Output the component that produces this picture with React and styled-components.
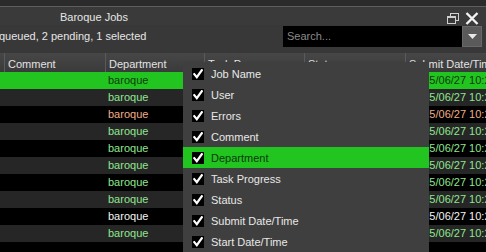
import React from "react";
import styled, { createGlobalStyle } from "styled-components";

const Global = createGlobalStyle`
  html, body { margin: 0; padding: 0; background: #000; }
  body { font-family: "Liberation Sans", Arial, sans-serif; font-size: 11px; }
`;

const Frame = styled.div`
  position: relative;
  width: 486px;
  height: 252px;
  overflow: hidden;
  background: #000;
  display: flex;
  flex-direction: column;
`;

const TopStrip = styled.div`
  height: 6px;
  background: #2b2b2b;
  border-bottom: 1px solid #5e5e5e;
  flex: none;
`;

const TitleBar = styled.div`
  height: 18px;
  background: #3a3a3a;
  display: flex;
  align-items: center;
  padding: 0 7px 0 60px;
  flex: none;
`;

const Title = styled.div`
  color: #e6e6e6;
  font-size: 11px;
  flex: 1;
  margin-top: 1px;
`;

const IconBtn = styled.div`
  display: flex;
  align-items: center;
  margin-left: ${(p) => p.$gap || 0}px;
  margin-top: 5px;
`;

const Toolbar = styled.div`
  height: 28px;
  background: #383838;
  display: flex;
  align-items: flex-start;
  padding: 1px 4px 0 0;
  box-sizing: border-box;
  flex: none;
`;

const Status = styled.div`
  color: #e6e6e6;
  font-size: 11px;
  flex: 1;
  line-height: 21px;
  margin-left: -1px;
`;

const Search = styled.div`
  width: 179px;
  height: 21px;
  background: #000;
  color: #8a8a8a;
  font-size: 11px;
  line-height: 21px;
  padding-left: 4px;
  box-sizing: border-box;
`;

const DropBtn = styled.div`
  width: 20px;
  height: 21px;
  background: #5a5a5a;
  border: 1px solid #686868;
  box-sizing: border-box;
  display: flex;
  align-items: center;
  justify-content: center;
`;

const cols = "4px 101px 99px 100px 101px 120px";

const Header = styled.div`
  height: 19px;
  display: grid;
  grid-template-columns: ${cols};
  grid-template-rows: 19px;
  background: linear-gradient(#474747, #3a3a3a);
  flex: none;
`;

const HeadCell = styled.div`
  color: #e2e2e2;
  font-size: 11px;
  line-height: 15px;
  padding: 4px 0 0 3px;
  white-space: nowrap;
  overflow: hidden;
  border-left: ${(p) => (p.$first ? "none" : "1px solid #5a5a5a")};
`;

const Row = styled.div`
  height: 17px;
  display: grid;
  grid-template-columns: ${cols};
  background: ${(p) => p.$bg};
  color: ${(p) => p.$fg};
  flex: none;
`;

const Cell = styled.div`
  font-size: 11px;
  line-height: 17px;
  padding-left: ${(p) => p.$pad ?? 4}px;
  white-space: nowrap;
  overflow: hidden;
`;

const Menu = styled.div`
  position: absolute;
  left: 183px;
  top: 62px;
  width: 246px;
  background: #3f3f3f;
  padding-top: 1px;
`;

const Item = styled.div`
  height: 21px;
  display: flex;
  align-items: center;
  padding-left: 9px;
  background: ${(p) => (p.$active ? "#22c41f" : "transparent")};
  color: ${(p) => (p.$active ? "#0d3a0d" : "#e8e8e8")};
  font-size: 11px;
`;

const Box = styled.div`
  width: 12px;
  height: 12px;
  background: #000;
  display: flex;
  align-items: center;
  justify-content: center;
  margin-right: 7px;
  flex: none;
`;

const Check = () => (
  <svg width="10" height="10" viewBox="0 0 10 10">
    <path d="M1.3 5.2 L3.8 8.2 L8.8 1.2" fill="none" stroke="#fff" strokeWidth="2.2" strokeLinecap="square" />
  </svg>
);

const RestoreIcon = () => (
  <svg width="12" height="11" viewBox="0 0 12 11">
    <rect x="3.5" y="0.5" width="8" height="7" fill="none" stroke="#cfcfcf" strokeWidth="1" />
    <rect x="0.5" y="3.5" width="8" height="7" fill="#3a3a3a" stroke="#cfcfcf" strokeWidth="1" />
    <line x1="0.5" y1="4.5" x2="8.5" y2="4.5" stroke="#cfcfcf" strokeWidth="1" />
  </svg>
);

const CloseIcon = () => (
  <svg width="14" height="13" viewBox="0 0 14 13">
    <path d="M1.5 1 L12.5 12 M12.5 1 L1.5 12" stroke="#f2f2f2" strokeWidth="2.4" />
  </svg>
);

const Arrow = () => (
  <svg width="9" height="5" viewBox="0 0 9 5">
    <path d="M0 0 H9 L4.5 5 Z" fill="#e8e8e8" />
  </svg>
);

const GREEN = "#8fe68f";
const ORANGE = "#f2ad85";
const WHITE = "#f4f4f4";

const rows = [
  { bg: "#22c41f", fg: "#0d3a0d" },
  { bg: "#262626", fg: GREEN },
  { bg: "#000", fg: ORANGE },
  { bg: "#262626", fg: GREEN },
  { bg: "#000", fg: GREEN },
  { bg: "#262626", fg: GREEN },
  { bg: "#000", fg: GREEN },
  { bg: "#262626", fg: GREEN },
  { bg: "#000", fg: WHITE },
  { bg: "#262626", fg: GREEN },
];

const menuItems = [
  "Job Name",
  "User",
  "Errors",
  "Comment",
  "Department",
  "Task Progress",
  "Status",
  "Submit Date/Time",
  "Start Date/Time",
  "Elapsed Time",
];

export default function App() {
  return (
    <>
      <Global />
      <Frame>
        <TopStrip />
        <TitleBar>
          <Title>Baroque Jobs</Title>
          <IconBtn><RestoreIcon /></IconBtn>
          <IconBtn $gap={6}><CloseIcon /></IconBtn>
        </TitleBar>
        <Toolbar>
          <Status>queued, 2 pending, 1 selected</Status>
          <Search>Search...</Search>
          <DropBtn><Arrow /></DropBtn>
        </Toolbar>
        <Header>
          <HeadCell $first />
          <HeadCell>Comment</HeadCell>
          <HeadCell>Department</HeadCell>
          <HeadCell>Task Progress</HeadCell>
          <HeadCell>Status</HeadCell>
          <HeadCell>Submit Date/Time</HeadCell>
        </Header>
        {rows.map((r, i) => (
          <Row key={i} $bg={r.bg} $fg={r.fg}>
            <Cell />
            <Cell />
            <Cell $pad={3}>baroque</Cell>
            <Cell />
            <Cell />
            <Cell $pad={6}>2015/06/27 10:2{i}:14</Cell>
          </Row>
        ))}
        <Menu>
          {menuItems.map((m) => (
            <Item key={m} $active={m === "Department"}>
              <Box><Check /></Box>
              {m}
            </Item>
          ))}
        </Menu>
      </Frame>
    </>
  );
}
